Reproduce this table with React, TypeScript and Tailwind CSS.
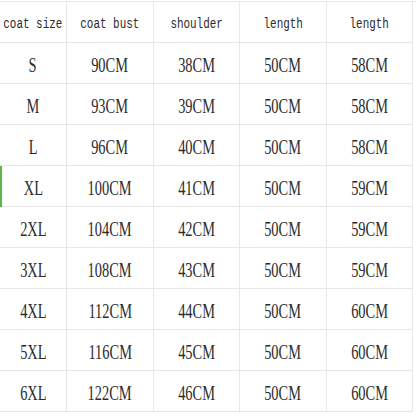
import React from 'react';

const headers = ['coat size', 'coat bust', 'shoulder', 'length', 'length'];

const rows: string[][] = [
  ['S', '90CM', '38CM', '50CM', '58CM'],
  ['M', '93CM', '39CM', '50CM', '58CM'],
  ['L', '96CM', '40CM', '50CM', '58CM'],
  ['XL', '100CM', '41CM', '50CM', '59CM'],
  ['2XL', '104CM', '42CM', '50CM', '59CM'],
  ['3XL', '108CM', '43CM', '50CM', '59CM'],
  ['4XL', '112CM', '44CM', '50CM', '60CM'],
  ['5XL', '116CM', '45CM', '50CM', '60CM'],
  ['6XL', '122CM', '46CM', '50CM', '60CM'],
];

const cols = 'grid grid-cols-[67px_87px_86px_87px_86px]';

export default function App() {
  return (
    <div className="w-[416px] h-[416px] bg-white overflow-hidden pt-px text-[#2b2b2b]">
      <div className={`${cols} border-t border-[#e8e8e8]`}>
        {headers.map((h, i) => (
          <div key={i} className="h-[41px] border-r border-b border-[#e8e8e8] flex items-center justify-center pt-1">
            <span className="inline-block whitespace-nowrap scale-x-[0.78] text-[14px] font-['Liberation_Mono',monospace]">{h}</span>
          </div>
        ))}
      </div>
      {rows.map((r, ri) => (
        <div key={ri} className={`${cols} relative`}>
          {ri === 3 && <div className="absolute left-0 top-0 w-[2px] h-[41px] bg-[#5fb446]" />}
          {r.map((c, ci) => (
            <div key={ci} className="h-[41px] border-r border-b border-[#e8e8e8] flex items-center justify-center pt-1">
              <span className="inline-block whitespace-nowrap scale-x-[0.72] text-[20px] font-['Liberation_Serif',serif]">{c}</span>
            </div>
          ))}
        </div>
      ))}
    </div>
  );
}
